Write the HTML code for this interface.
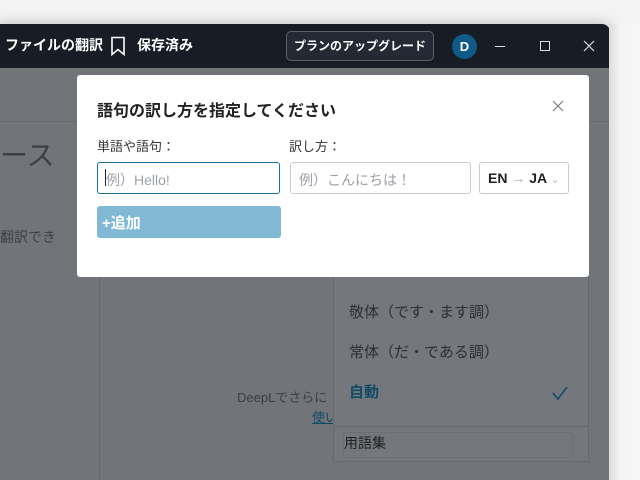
<!DOCTYPE html>
<html><head><meta charset="utf-8"><style>
*{margin:0;padding:0;box-sizing:border-box}
html,body{width:640px;height:480px;overflow:hidden}
body{background:#f3f3f3;font-family:"Liberation Sans","Noto Sans CJK JP",sans-serif;position:relative}
.win{position:absolute;left:-2px;top:24px;width:612px;height:456px;border-radius:0 8px 0 0;overflow:hidden;box-shadow:0 0 14px rgba(0,0,0,.25)}
.tb{position:absolute;left:0;top:0;width:100%;height:44px;background:#181d25;color:#fff}
.content{position:absolute;left:0;top:44px;width:100%;height:412px;background:#717479;overflow:hidden}
.t{position:absolute;white-space:nowrap;line-height:1.2}
.modal{position:absolute;left:77px;top:75px;width:512px;height:202px;background:#fff;border-radius:3px}
.inp{position:absolute;height:32px;border:1px solid #c8ccd3;border-radius:3px;font-size:14px;color:#9ca0a6;padding:7px 0 0 8px}
</style></head><body>
<div class="win">
 <div class="tb">
  <div class="t" style="left:7px;top:13px;font-size:14px;font-weight:bold">ファイルの翻訳</div>
  <svg style="position:absolute;left:112px;top:12px" width="16" height="20" viewBox="0 0 16 20"><path d="M2 1.5h12v17l-6-5-6 5z" fill="none" stroke="#fff" stroke-width="1.6"/></svg>
  <div class="t" style="left:139px;top:13px;font-size:14px;font-weight:bold">保存済み</div>
  <div style="position:absolute;left:288px;top:7px;width:148px;height:30px;border:1px solid #5a616b;border-radius:5px;background:#242a33;font-size:12px;font-weight:bold;text-align:center;line-height:28px">プランのアップグレード</div>
  <div style="position:absolute;left:454px;top:10px;width:25px;height:25px;border-radius:50%;background:#0f5a88;font-size:13px;font-weight:bold;text-align:center;line-height:25px">D</div>
  <div style="position:absolute;left:497px;top:22px;width:10px;height:1px;background:#ddd"></div>
  <div style="position:absolute;left:542px;top:17px;width:10px;height:10px;border:1px solid #ddd"></div>
  <svg style="position:absolute;left:585px;top:16px" width="12" height="12"><path d="M1 1L11 11M11 1L1 11" stroke="#ddd" stroke-width="1.2"/></svg>
 </div>
 <div class="content">
  <div style="position:absolute;left:0;top:53px;width:100%;height:1px;background:#66696e"></div>
  <div style="position:absolute;left:101px;top:53px;width:1px;height:359px;background:#66696e"></div>
  <div class="t" style="left:2px;top:71px;font-size:28px;color:#3c3f44">ース</div>
  <div class="t" style="left:2px;top:161px;font-size:14px;color:#3c3f44">翻訳でき</div>
  <div class="t" style="left:239px;top:322px;font-size:13px;color:#3c3f44">DeepLでさらに</div>
  <div class="t" style="left:314px;top:342px;font-size:13px;color:#124a66;text-decoration:underline">使い</div>
  <div style="position:absolute;left:335px;top:196px;width:256px;height:198px;background:#74777c;border:1px solid #66696e;border-top:none">
   <div class="t" style="left:15px;top:0px;font-size:12px;font-weight:bold;color:#222">語調</div>
   <div style="position:absolute;left:0;top:12px;width:100%;height:1px;background:#6a6d72"></div>
   <div class="t" style="left:15px;top:40px;font-size:15px;color:#2c2f33">敬体（です・ます調）</div>
   <div class="t" style="left:15px;top:80px;font-size:15px;color:#2c2f33">常体（だ・である調）</div>
   <div class="t" style="left:15px;top:120px;font-size:15px;font-weight:bold;color:#124a66">自動</div>
   <svg style="position:absolute;left:218px;top:122px" width="16" height="14"><path d="M1 7l5 6 9-12" fill="none" stroke="#124a66" stroke-width="1.5"/></svg>
   <div style="position:absolute;left:0;top:162px;width:100%;height:1px;background:#66696e"></div>
   <div style="position:absolute;left:9px;top:168px;width:230px;height:26px;border:1px solid #6c6f74;border-radius:3px"></div>
   <div class="t" style="left:10px;top:171px;font-size:14px;color:#222">用語集</div>
  </div>
 </div>
</div>
<div style="position:absolute;left:609px;top:24px;width:31px;height:456px;background:linear-gradient(90deg,#ddd,#f5f5f5 40%,#f7f7f7)"></div>
<div class="modal">
 <div class="t" style="left:20px;top:27px;font-size:16px;font-weight:bold;color:#222">語句の訳し方を指定してください</div>
 <svg style="position:absolute;left:475px;top:25px" width="12" height="12"><path d="M1 1L11 11M11 1L1 11" stroke="#777" stroke-width="1.1"/></svg>
 <div class="t" style="left:20px;top:64px;font-size:13px;color:#333">単語や語句：</div>
 <div class="t" style="left:212px;top:64px;font-size:13px;color:#333">訳し方：</div>
 <div class="inp" style="left:20px;top:87px;width:183px;border-color:#1a6e98">例）Hello!</div>
 <div style="position:absolute;left:28px;top:94px;width:1px;height:17px;background:#222"></div>
 <div class="inp" style="left:213px;top:87px;width:181px">例）こんにちは！</div>
 <div class="inp" style="left:402px;top:87px;width:90px;color:#222;font-weight:bold;padding-left:8px">EN <span style="color:#aaa;font-weight:normal">→</span> JA <span style="color:#bbb;font-weight:normal;font-size:11px">⌄</span></div>
 <div style="position:absolute;left:20px;top:131px;width:184px;height:32px;background:#81b9d4;border-radius:3px;color:#fff;font-size:15px;font-weight:bold;padding:6px 0 0 5px">+追加</div>
</div>
</body></html>
